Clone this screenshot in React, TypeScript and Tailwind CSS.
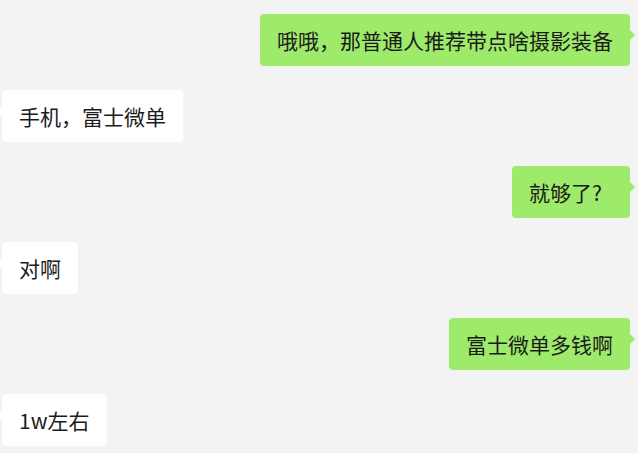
const messages = [
  { id: 1, mine: true, text: "哦哦，那普通人推荐带点啥摄影装备", extra: "" },
  { id: 2, mine: false, text: "手机，富士微单", extra: "" },
  { id: 3, mine: true, text: "就够了?", extra: "pr-[28px]" },
  { id: 4, mine: false, text: "对啊", extra: "" },
  { id: 5, mine: true, text: "富士微单多钱啊", extra: "" },
  { id: 6, mine: false, text: "1w左右", extra: "" },
];

function Bubble({ mine, text, extra }: { mine: boolean; text: string; extra: string }) {
  return (
    <div className={`flex ${mine ? "justify-end pr-[8px]" : "justify-start pl-[2px]"}`}>
      <div
        className={`relative h-[52px] flex items-center px-[17px] rounded-[4px] text-[21px] leading-none text-[#1b1b1b] ${
          mine ? "bg-[#9eea6a]" : "bg-white"
        } ${extra}`}
      >
        {text}
        <span
          className={`absolute top-[16px] w-0 h-0 border-y-[5px] border-y-transparent ${
            mine
              ? "right-[-5px] border-l-[5px] border-l-[#9eea6a]"
              : "left-[-5px] border-r-[5px] border-r-white"
          }`}
        />
      </div>
    </div>
  );
}

export default function App() {
  return (
    <div
      className="w-[638px] h-[453px] overflow-hidden bg-[#f3f3f3] pt-[14px] flex flex-col gap-[24px]"
      style={{ fontFamily: '"Noto Sans CJK SC", "Noto Sans", sans-serif' }}
    >
      {messages.map((m) => (
        <Bubble key={m.id} mine={m.mine} text={m.text} extra={m.extra} />
      ))}
    </div>
  );
}
